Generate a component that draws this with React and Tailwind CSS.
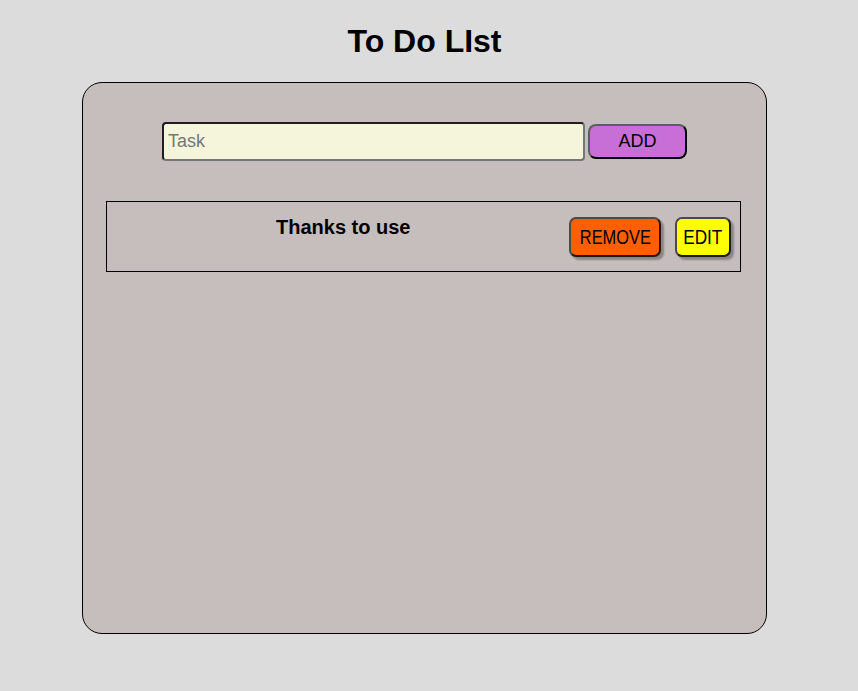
import React from "react";

const App = () => (
  <div className="min-h-screen bg-[#dcdcdc] pt-[23px] font-['Liberation_Sans',Arial,sans-serif] text-black">
    <div className="w-[849px] flex flex-col items-center">
      <h1 className="text-[32px] leading-[37px] font-bold">To Do LIst</h1>

      <div className="mt-[22px] w-[685px] h-[552px] bg-[#c6bebd] border border-black rounded-[20px] pl-[23px] pr-[25px] pt-[39px]">
        <div className="flex items-center justify-center gap-[3px] pl-[2px]">
          <input
            type="text"
            placeholder="Task"
            className="w-[423px] h-[39px] bg-[#f5f5dc] border-2 border-t-[#1e1e1e] border-l-[#1e1e1e] border-b-[#767676] border-r-[#767676] rounded-[4px] pl-[4px] text-[18px] placeholder:text-[#767676] outline-none"
          />
          <button className="w-[99px] h-[35px] bg-[#c86fd7] border-2 border-t-[#5e5e5e] border-l-[#5e5e5e] border-b-black border-r-black rounded-[8px] text-[18px]">
            ADD
          </button>
        </div>

        <div className="mt-[40px] h-[71px] border border-black flex items-start pt-[15px]">
          <div className="flex-1 pl-[169px] -mt-px">
            <span className="text-[20px] leading-[23px] font-bold">Thanks to use</span>
          </div>
          <div className="flex gap-[14px] mr-[9px]">
            <button className="w-[92px] h-[40px] bg-[#ff5f00] border-2 border-t-[#4a4a4a] border-l-[#4a4a4a] border-b-[#1a1a1a] border-r-[#1a1a1a] rounded-[7px] text-[20px] shadow-[3px_3px_2px_rgba(0,0,0,0.3)]">
              <span className="inline-block scale-x-[0.82]">REMOVE</span>
            </button>
            <button className="w-[56px] h-[40px] bg-[#ffff00] border-2 border-t-[#4a4a4a] border-l-[#4a4a4a] border-b-[#1a1a1a] border-r-[#1a1a1a] rounded-[7px] text-[20px] shadow-[3px_3px_2px_rgba(0,0,0,0.3)]">
              <span className="inline-block scale-x-[0.86]">EDIT</span>
            </button>
          </div>
        </div>
      </div>
    </div>
  </div>
);

export default App;
